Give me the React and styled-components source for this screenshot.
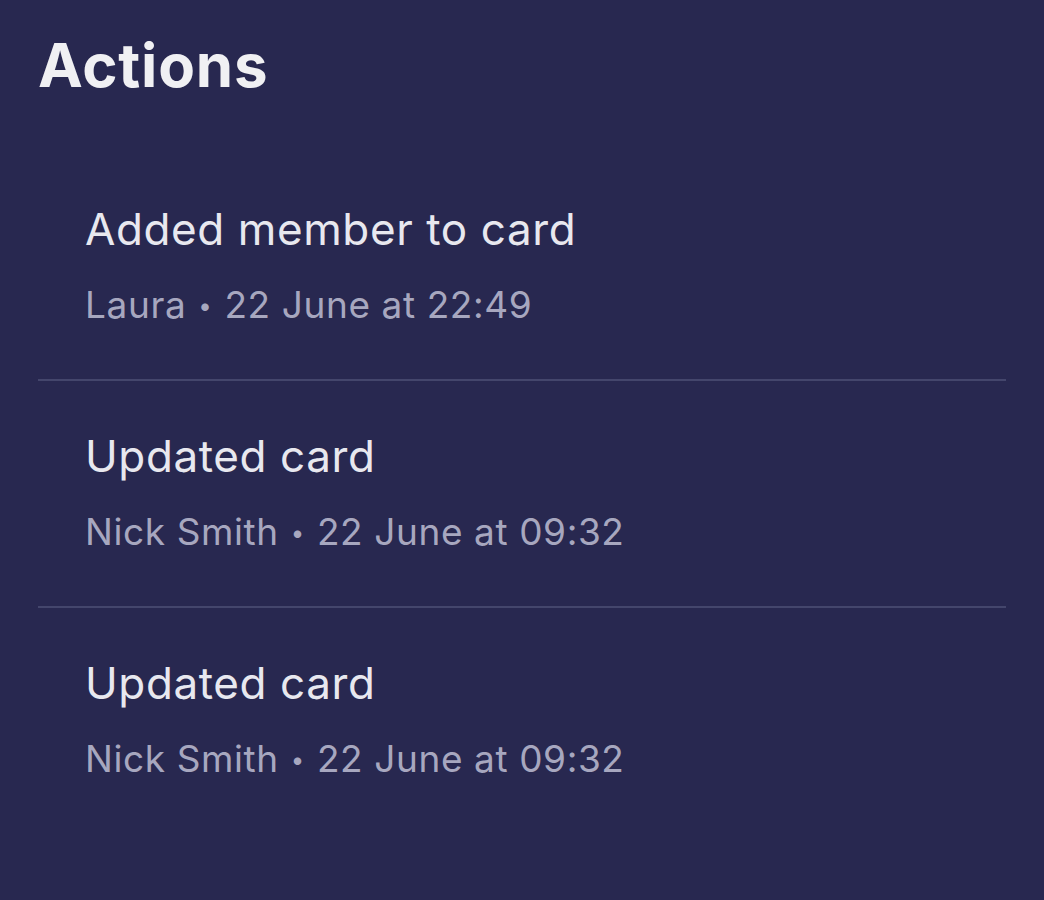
import React from 'react';
import styled, { createGlobalStyle } from 'styled-components';

const GlobalStyle = createGlobalStyle`
  html, body {
    margin: 0;
    padding: 0;
    background: #282850;
  }
  body {
    font-family: Inter, "Noto Sans", sans-serif;
    -webkit-font-smoothing: antialiased;
  }
`;

const Panel = styled.section`
  min-height: 900px;
  box-sizing: border-box;
  padding: 29px 38px 0;
  background: #282850;
`;

const Heading = styled.h2`
  margin: 0 0 53px;
  font-size: 60px;
  line-height: 72px;
  font-weight: 700;
  letter-spacing: 0.8px;
  color: #f0f0f3;
`;

const List = styled.ul`
  list-style: none;
  margin: 0;
  padding: 0;
`;

const Item = styled.li`
  display: flex;
  flex-direction: column;
  gap: 28px;
  padding: 49px 0 51px 47px;
  border-bottom: 2px solid ${props => (props.$last ? 'transparent' : '#44466c')};
`;

const ItemTitle = styled.p`
  margin: 0;
  font-size: 44px;
  line-height: 52px;
  font-weight: 400;
  letter-spacing: 0.6px;
  color: #e8e8ef;
`;

const Meta = styled.p`
  margin: 0;
  font-size: 37px;
  line-height: 44px;
  letter-spacing: 0.6px;
  color: #a7a7bf;
`;

const Dot = styled.span`
  margin: 0 12px;
  font-size: 24px;
  vertical-align: 4px;
`;

const actions = [
  { title: 'Added member to card', user: 'Laura', when: '22 June at 22:49' },
  { title: 'Updated card', user: 'Nick Smith', when: '22 June at 09:32' },
  { title: 'Updated card', user: 'Nick Smith', when: '22 June at 09:32' },
];

const App = () => (
  <>
    <GlobalStyle />
    <Panel>
      <Heading>Actions</Heading>
      <List>
        {actions.map((a, i) => (
          <Item key={i} $last={i === actions.length - 1}>
            <ItemTitle>{a.title}</ItemTitle>
            <Meta>
              {a.user}
              <Dot>•</Dot>
              {a.when}
            </Meta>
          </Item>
        ))}
      </List>
    </Panel>
  </>
);

export default App;
